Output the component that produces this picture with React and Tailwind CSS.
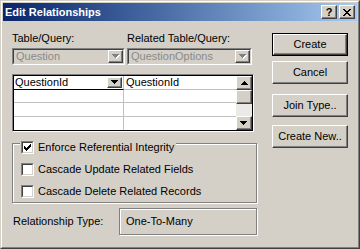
import React from "react";

// Classic Windows bevels
const raised =
    "border border-t-white border-l-white border-r-[#404040] border-b-[#404040] shadow-[inset_-1px_-1px_0_#808080]";
const sunken =
    "border border-t-[#808080] border-l-[#808080] border-r-white border-b-white";
const sunkenInner =
    "border border-t-[#404040] border-l-[#404040] border-r-[#d4d0c8] border-b-[#d4d0c8]";

const DownArrow = ({ color = "#000", shadow = false }) => (
    <svg width="8" height="5" viewBox="0 0 8 5" shapeRendering="crispEdges">
        {shadow && <polygon points="1,1 8,1 4.5,5" fill="#fff" />}
        <polygon points="0,0 7,0 3.5,4" fill={color} />
    </svg>
);

const UpArrow = () => (
    <svg width="7" height="4" viewBox="0 0 7 4" shapeRendering="crispEdges">
        <polygon points="0,4 7,4 3.5,0" fill="#000" />
    </svg>
);

const Checkbox = ({ checked }) => (
    <div className={`w-[13px] h-[13px] shrink-0 ${sunken}`}>
        <div className={`w-full h-full bg-white flex items-center justify-center ${sunkenInner}`}>
            {checked && (
                <svg width="7" height="7" viewBox="0 0 7 7" shapeRendering="crispEdges">
                    <polygon points="0,2 2,4 7,-1 7,2 2,7 0,5" fill="#000" />
                </svg>
            )}
        </div>
    </div>
);

const Combo = ({ value, width }) => (
    <div className={`h-[17px] ${width} ${sunken}`}>
        <div className={`h-full flex items-center bg-[#d4d0c8] ${sunkenInner}`}>
            <span className="flex-1 pl-[2px] text-[#8a8a8a] leading-[13px]">{value}</span>
            <div className={`w-[15px] h-full flex items-center justify-center bg-[#d4d0c8] ${raised}`}>
                <DownArrow color="#808080" shadow />
            </div>
        </div>
    </div>
);

const Button = ({ label, isDefault }) => (
    <div className={`w-[76px] h-[23px] ${isDefault ? "border border-black" : ""}`}>
        <div className={`w-full h-full flex items-center justify-center bg-[#d4d0c8] ${raised}`}>
            <span className="leading-[13px]">{label}</span>
        </div>
    </div>
);

const CheckRow = ({ checked, label }) => (
    <div className="flex items-center h-[13px] gap-[4px]">
        <Checkbox checked={checked} />
        <span className="leading-[13px] whitespace-nowrap">{label}</span>
    </div>
);

export default function App() {
    const rows = [["QuestionId", "QuestionId"], ["", ""], ["", ""], ["", ""]];

    return (
        <div className="w-[360px] h-[249px] bg-[#d4d0c8] border border-t-[#d4d0c8] border-l-[#d4d0c8] border-r-[#404040] border-b-[#404040] font-['Liberation_Sans',Arial,sans-serif] text-[11px] text-black overflow-hidden">
            <div className="h-full flex flex-col p-px border border-t-white border-l-white border-r-[#808080] border-b-[#808080]">
                {/* Title bar */}
                <div className="h-[18px] shrink-0 flex items-center pl-[2px] pr-[2px] bg-gradient-to-r from-[#0a246a] to-[#a6caf0]">
                    <span className="flex-1 text-white font-bold leading-[13px]">Edit Relationships</span>
                    <div className="flex gap-[2px]">
                        <div className={`w-[16px] h-[14px] flex items-center justify-center bg-[#d4d0c8] ${raised}`}>
                            <span className="font-bold text-[11px] leading-[11px]">?</span>
                        </div>
                        <div className={`w-[16px] h-[14px] flex items-center justify-center bg-[#d4d0c8] ${raised}`}>
                            <svg width="8" height="7" viewBox="0 0 8 7" shapeRendering="crispEdges">
                                <path d="M0 0h2l2 2.5 2-2.5h2l-3 3.5 3 3.5h-2l-2-2.5-2 2.5h-2l3-3.5z" fill="#000" />
                            </svg>
                        </div>
                    </div>
                </div>

                {/* Body */}
                <div className="flex-1 flex pl-[9px]">
                    <div className="w-[245px] flex flex-col pt-[11px]">
                        <div className="grid grid-cols-[113px_125px] gap-x-[2px]">
                            <span className="leading-[13px]">Table/Query:</span>
                            <span className="leading-[13px]">Related Table/Query:</span>
                            <div className="mt-[3px]"><Combo value="Question" width="w-[113px]" /></div>
                            <div className="mt-[3px]"><Combo value="QuestionOptions" width="w-[125px]" /></div>
                        </div>

                        {/* Field grid */}
                        <div className="mt-[9px] w-[242px] h-[58px] border border-t-[#808080] border-l-[#808080] border-r-white border-b-white">
                            <div className="h-full flex bg-white border border-black">
                                <div className="flex-1 flex flex-col">
                                    {rows.map((r, i) => (
                                        <div key={i} className={`flex h-[14px] ${i < 3 ? "border-b border-[#c0c0c0]" : ""}`}>
                                            <div className={`w-[110px] flex items-center border-r border-[#c0c0c0] ${i === 0 ? "border-b border-b-black -mb-px" : ""}`}>
                                                <span className="flex-1 pl-[1px] leading-[13px]">{r[0]}</span>
                                                {i === 0 && (
                                                    <div className={`w-[15px] h-[11px] mr-px flex items-center justify-center bg-[#d4d0c8] ${raised}`}>
                                                        <DownArrow />
                                                    </div>
                                                )}
                                            </div>
                                            <div className="flex-1 flex items-center">
                                                <span className="pl-[2px] leading-[13px]">{r[1]}</span>
                                            </div>
                                        </div>
                                    ))}
                                </div>
                                {/* Scrollbar */}
                                <div className="w-[16px] flex flex-col">
                                    <div className={`h-[14px] flex items-center justify-center bg-[#d4d0c8] ${raised}`}>
                                        <UpArrow />
                                    </div>
                                    <div className={`h-[14px] bg-[#d4d0c8] ${raised}`} />
                                    <div className="flex-1 bg-[#eceae6]" />
                                    <div className={`h-[14px] flex items-center justify-center bg-[#d4d0c8] ${raised}`}>
                                        <DownArrow />
                                    </div>
                                </div>
                            </div>
                        </div>

                        {/* Group box */}
                        <div className="mt-[11px] h-[60px] flex flex-col border border-[#808080] shadow-[inset_1px_1px_0_#fff,1px_1px_0_#fff]">
                            <div className="-mt-[3px] ml-[7px] self-start pl-px pr-[2px] bg-[#d4d0c8]">
                                <CheckRow checked label="Enforce Referential Integrity" />
                            </div>
                            <div className="pl-[8px] mt-[9px]">
                                <CheckRow label="Cascade Update Related Fields" />
                            </div>
                            <div className="pl-[8px] mt-[9px]">
                                <CheckRow label="Cascade Delete Related Records" />
                            </div>
                        </div>

                        {/* Relationship type */}
                        <div className="mt-[5px] flex items-center">
                            <span className="w-[107px] pl-px leading-[13px]">Relationship Type:</span>
                            <div className="w-[138px] h-[27px] flex items-center pl-[6px] border border-[#808080] shadow-[inset_1px_1px_0_#fff,1px_1px_0_#fff]">
                                <span className="leading-[13px]">One-To-Many</span>
                            </div>
                        </div>
                    </div>

                    {/* Buttons */}
                    <div className="ml-[15px] flex flex-col pt-[12px]">
                        <Button label="Create" isDefault />
                        <div className="mt-[5px]"><Button label="Cancel" /></div>
                        <div className="mt-[10px]"><Button label="Join Type.." /></div>
                        <div className="mt-[8px]"><Button label="Create New.." /></div>
                    </div>
                </div>
            </div>
        </div>
    );
}
